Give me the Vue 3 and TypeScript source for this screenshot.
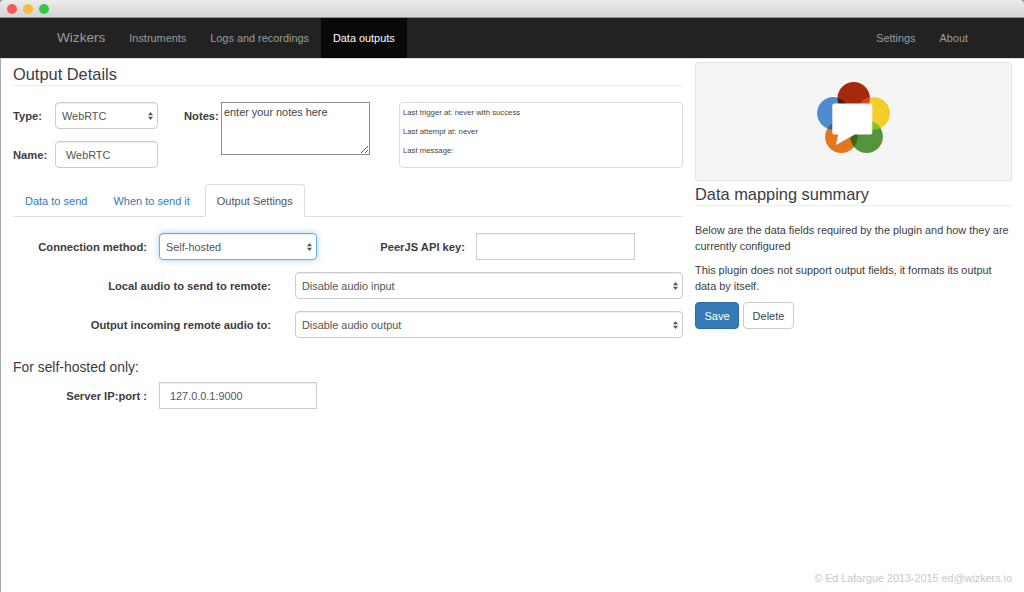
<script setup lang="ts">
const navLeft = ['Instruments', 'Logs and recordings']
const statusLines = ['Last trigger at: never with success', 'Last attempt at: never', 'Last message:']
</script>

<template>
  <div class="window">
    <div class="titlebar">
      <span class="light red"></span>
      <span class="light yellow"></span>
      <span class="light green"></span>
    </div>

    <nav class="navbar">
      <a class="brand">Wizkers</a>
      <a v-for="item in navLeft" :key="item" class="nav-link">{{ item }}</a>
      <a class="nav-link active">Data outputs</a>
      <div class="nav-right">
        <a class="nav-link">Settings</a>
        <a class="nav-link">About</a>
      </div>
    </nav>

    <main class="content">
      <section class="left">
        <h3 class="heading">Output Details</h3>

        <div class="details">
          <div class="details-fields">
            <div class="field">
              <label class="type-label">Type:</label>
              <div class="select-wrap type-control">
                <select class="control"><option>WebRTC</option></select>
                <svg class="arrows" viewBox="0 0 7 11"><path d="M3.5 0 7 4.5H0zM3.5 11 0 6.5h7z" /></svg>
              </div>
            </div>
            <div class="field">
              <label class="type-label">Name:</label>
              <input class="control text type-control" value="WebRTC" />
            </div>
          </div>
          <label class="notes-label">Notes:</label>
          <textarea class="notes" spellcheck="false">enter your notes here</textarea>
          <div class="status">
            <p v-for="line in statusLines" :key="line">{{ line }}</p>
          </div>
        </div>

        <ul class="tabs">
          <li class="tab">Data to send</li>
          <li class="tab">When to send it</li>
          <li class="tab current">Output Settings</li>
        </ul>

        <div class="row first">
          <label class="label short">Connection method:</label>
          <div class="select-wrap method">
            <select class="control focused"><option>Self-hosted</option></select>
            <svg class="arrows" viewBox="0 0 7 11"><path d="M3.5 0 7 4.5H0zM3.5 11 0 6.5h7z" /></svg>
          </div>
          <label class="label key">PeerJS API key:</label>
          <input class="control key-input" />
        </div>

        <div class="row">
          <label class="label long">Local audio to send to remote:</label>
          <div class="select-wrap wide">
            <select class="control"><option>Disable audio input</option></select>
            <svg class="arrows" viewBox="0 0 7 11"><path d="M3.5 0 7 4.5H0zM3.5 11 0 6.5h7z" /></svg>
          </div>
        </div>

        <div class="row">
          <label class="label long">Output incoming remote audio to:</label>
          <div class="select-wrap wide">
            <select class="control"><option>Disable audio output</option></select>
            <svg class="arrows" viewBox="0 0 7 11"><path d="M3.5 0 7 4.5H0zM3.5 11 0 6.5h7z" /></svg>
          </div>
        </div>

        <h4 class="sub">For self-hosted only:</h4>
        <div class="row server">
          <label class="label short">Server IP:port :</label>
          <input class="control text square method" value="127.0.0.1:9000" />
        </div>
      </section>

      <aside class="right">
        <div class="well">
          <svg class="logo" viewBox="816 82 76 72" width="76" height="72">
            <defs>
              <clipPath id="c-red"><circle cx="853.7" cy="98.3" r="16.2" /></clipPath>
              <clipPath id="c-yellow"><circle cx="873.7" cy="113.3" r="16.2" /></clipPath>
              <clipPath id="c-orange"><circle cx="841.3" cy="136.7" r="16.2" /></clipPath>
            </defs>
            <circle cx="853.7" cy="98.3" r="16.2" fill="#a5290d" />
            <circle cx="833.3" cy="113.3" r="16.2" fill="#4e8ccf" />
            <circle cx="873.7" cy="113.3" r="16.2" fill="#f4cd2b" />
            <circle cx="841.3" cy="136.7" r="16.2" fill="#e3761f" />
            <circle cx="866.7" cy="136.7" r="16.2" fill="#57933c" />
            <circle cx="833.3" cy="113.3" r="16.2" fill="#551605" clip-path="url(#c-red)" />
            <circle cx="873.7" cy="113.3" r="16.2" fill="#e5401b" clip-path="url(#c-red)" />
            <circle cx="833.3" cy="113.3" r="16.2" fill="#33618c" clip-path="url(#c-orange)" />
            <circle cx="866.7" cy="136.7" r="16.2" fill="#78c81f" clip-path="url(#c-yellow)" />
            <circle cx="866.7" cy="136.7" r="16.2" fill="#3c6a0b" clip-path="url(#c-orange)" />
            <path
              d="M834.3 103.500h36a2 2 0 0 1 2 2v27a2 2 0 0 1-2 2h-15.500L836 145l2.200-10.500h-3.900a2 2 0 0 1-2-2v-27a2 2 0 0 1 2-2z"
              fill="#fff"
            />
          </svg>
        </div>

        <h3 class="heading summary">Data mapping summary</h3>
        <p class="text-p first-p">Below are the data fields required by the plugin and how they are currently configured</p>
        <p class="text-p">This plugin does not support output fields, it formats its output data by itself.</p>

        <div class="buttons">
          <button class="btn save">Save</button>
          <button class="btn delete">Delete</button>
        </div>
      </aside>

      <footer class="footer">© Ed Lafargue 2013-2015 ed@wizkers.io</footer>
    </main>
  </div>
</template>

<style>
html,
body {
  margin: 0;
  background: #fff;
}
</style>

<style scoped>
.window {
  height: 592px;
  width: 1024px;
  display: flex;
  flex-direction: column;
  overflow: hidden;
  font-family: "Liberation Sans", Arial, sans-serif;
  color: #3c3c3c;
  font-size: 11.2px;
  background: #8a8a8a;
}

.titlebar {
  height: 17px;
  flex: none;
  display: flex;
  align-items: center;
  gap: 6px;
  padding: 0 0 0 7px;
  background: linear-gradient(#ececec, #d4d4d4);
  border-bottom: 1px solid #8f8f8f;
  border-radius: 4px 4px 0 0;
}

.light {
  width: 10px;
  height: 10px;
  border-radius: 50%;
}

.red { background: #fb5b55; }
.yellow { background: #fcbb40; }
.green { background: #34c84a; }

.navbar {
  height: 40px;
  flex: none;
  display: flex;
  align-items: stretch;
  background: #222;
  border-bottom: 1px solid #ddd;
  padding-left: 45px;
  color: #9d9d9d;
  font-size: 10.9px;
}

.brand {
  font-size: 13.6px;
  line-height: 40px;
  padding: 0 12px;
}

.nav-link {
  line-height: 40px;
  padding: 0 12px;
}

.nav-link.active {
  background: #080808;
  color: #fff;
}

.nav-right {
  margin-left: auto;
  display: flex;
  padding-right: 44px;
}

.content {
  flex: 1;
  position: relative;
  display: flex;
  gap: 12px;
  padding: 0 12px;
  border-left: 1px solid #a8a8a8;
  margin-top: -1px;
  background: #fff;
  background-clip: padding-box;
  border-top: 1px solid #ddd;
}

.left {
  width: 670px;
  flex: none;
}

.right {
  width: 317px;
  flex: none;
  padding-top: 3px;
}

.heading {
  margin: 6px 0 0;
  font-size: 16.4px;
  font-weight: 400;
  line-height: 18px;
  padding-bottom: 2px;
  border-bottom: 1px solid #eee;
  color: #3c3c3c;
}

.details {
  display: flex;
  align-items: flex-start;
  margin-top: 16px;
}

.details-fields {
  display: flex;
  flex-direction: column;
  gap: 12px;
  width: 145px;
  flex: none;
}

.field {
  display: flex;
  align-items: center;
  justify-content: space-between;
}

.type-label {
  font-weight: 700;
}

.control {
  display: block;
  box-sizing: border-box;
  width: 100%;
  height: 27px;
  font: inherit;
  font-size: 10.9px;
  color: #555;
  background: #fff;
  border: 1px solid #ccc;
  border-radius: 4px;
  padding: 0 6px;
  outline: none;
  appearance: none;
  box-shadow: inset 0 1px 1px rgba(0, 0, 0, 0.075);
}

.type-control {
  width: 103px;
}

.control.text {
  padding: 0 10px;
}

.control.focused {
  border-color: #66afe9;
  box-shadow: inset 0 1px 1px rgba(0, 0, 0, 0.075), 0 0 6px rgba(102, 175, 233, 0.6);
}

.control.square,
.key-input {
  border-radius: 0;
}

.select-wrap {
  position: relative;
}

.arrows {
  position: absolute;
  right: 5px;
  top: 50%;
  width: 5px;
  height: 8px;
  margin-top: -4px;
  fill: #555;
  pointer-events: none;
}

.notes-label {
  font-weight: 700;
  width: 34px;
  margin: 8px 3px 0 26px;
  white-space: nowrap;
}

.notes {
  width: 149px;
  height: 53px;
  box-sizing: border-box;
  flex: none;
  border: 1px solid #8d8d8d;
  font: inherit;
  font-size: 10.9px;
  color: #444;
  padding: 3px 2px;
  outline: none;
  margin: 0;
}

.status {
  margin-left: 29px;
  flex: 1;
  box-sizing: border-box;
  height: 66px;
  border: 1px solid #ddd;
  border-radius: 4px;
  padding: 5px 3px;
  font-size: 7.75px;
  color: #444;
}

.status p {
  margin: 0 0 9px;
  line-height: 10px;
}

.tabs {
  list-style: none;
  display: flex;
  margin: 16px 0 0;
  padding: 0;
  height: 33px;
  box-sizing: border-box;
  border-bottom: 1px solid #ddd;
  font-size: 11px;
}

.tab {
  color: #337ab7;
  padding: 0 11px;
  line-height: 32px;
  height: 33px;
  box-sizing: border-box;
  margin-right: 2px;
  border: 1px solid transparent;
}

.tab.current {
  color: #555;
  background: #fff;
  border-color: #ddd #ddd #fff;
  border-radius: 4px 4px 0 0;
  margin-left: 1px;
}

.row {
  display: flex;
  align-items: center;
  margin-top: 12px;
}

.row.first {
  margin-top: 16px;
}

.label {
  font-weight: 700;
  text-align: right;
  flex: none;
}

.label.short {
  width: 134px;
  margin-right: 12px;
}

.label.long {
  width: 258px;
  margin-right: 24px;
}

.method {
  width: 158px;
  flex: none;
}

.label.key {
  width: 148px;
  margin-right: 11px;
}

.key-input {
  width: 159px;
}

.wide {
  width: 388px;
  flex: none;
}

.sub {
  margin: 20px 0 0;
  font-size: 13.9px;
  font-weight: 400;
  line-height: 18px;
}

.server {
  margin-top: 6px;
}

.well {
  height: 119px;
  box-sizing: border-box;
  background: #f5f5f5;
  border: 1px solid #e3e3e3;
  border-radius: 3px;
  display: flex;
  justify-content: center;
  padding-top: 19px;
}

.logo {
  display: block;
}

.summary {
  margin-top: 4px;
}

.text-p {
  margin: 8px 0 0;
  line-height: 16px;
  font-size: 10.9px;
}

.first-p {
  margin-top: 16px;
}

.buttons {
  display: flex;
  gap: 4px;
  margin-top: 8px;
}

.btn {
  height: 27px;
  box-sizing: border-box;
  font: inherit;
  font-size: 11px;
  border-radius: 4px;
  border: 1px solid #ccc;
  padding: 0;
}

.save {
  width: 44px;
  background: #337ab7;
  border-color: #2e6da4;
  color: #fff;
}

.delete {
  width: 51px;
  background: #fff;
  color: #444;
}

.footer {
  position: absolute;
  right: 12px;
  bottom: 8px;
  color: #c8c8c8;
  font-size: 10.8px;
}
</style>
